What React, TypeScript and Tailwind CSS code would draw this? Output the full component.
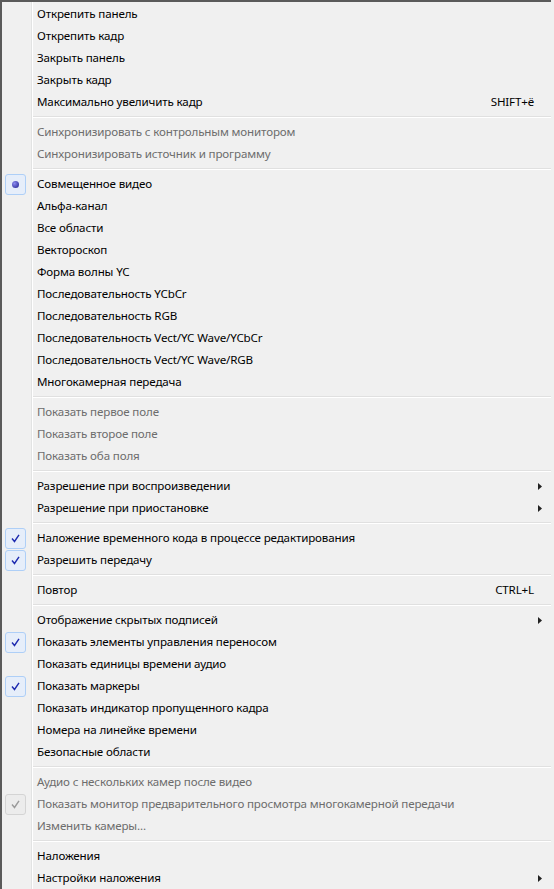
type Item =
  | { sep: true }
  | {
      sep?: false;
      label: string;
      disabled?: boolean;
      mark?: "check" | "radio";
      shortcut?: string;
      sub?: boolean;
    };

const items: Item[] = [
  { label: "Открепить панель" },
  { label: "Открепить кадр" },
  { label: "Закрыть панель" },
  { label: "Закрыть кадр" },
  { label: "Максимально увеличить кадр", shortcut: "SHIFT+ё" },
  { sep: true },
  { label: "Синхронизировать с контрольным монитором", disabled: true },
  { label: "Синхронизировать источник и программу", disabled: true },
  { sep: true },
  { label: "Совмещенное видео", mark: "radio" },
  { label: "Альфа-канал" },
  { label: "Все области" },
  { label: "Вектороскоп" },
  { label: "Форма волны YC" },
  { label: "Последовательность YCbCr" },
  { label: "Последовательность RGB" },
  { label: "Последовательность Vect/YC Wave/YCbCr" },
  { label: "Последовательность Vect/YC Wave/RGB" },
  { label: "Многокамерная передача" },
  { sep: true },
  { label: "Показать первое поле", disabled: true },
  { label: "Показать второе поле", disabled: true },
  { label: "Показать оба поля", disabled: true },
  { sep: true },
  { label: "Разрешение при воспроизведении", sub: true },
  { label: "Разрешение при приостановке", sub: true },
  { sep: true },
  { label: "Наложение временного кода в процессе редактирования", mark: "check" },
  { label: "Разрешить передачу", mark: "check" },
  { sep: true },
  { label: "Повтор", shortcut: "CTRL+L" },
  { sep: true },
  { label: "Отображение скрытых подписей", sub: true },
  { label: "Показать элементы управления переносом", mark: "check" },
  { label: "Показать единицы времени аудио" },
  { label: "Показать маркеры", mark: "check" },
  { label: "Показать индикатор пропущенного кадра" },
  { label: "Номера на линейке времени" },
  { label: "Безопасные области" },
  { sep: true },
  { label: "Аудио с нескольких камер после видео", disabled: true },
  {
    label: "Показать монитор предварительного просмотра многокамерной передачи",
    disabled: true,
    mark: "check",
  },
  { label: "Изменить камеры...", disabled: true },
  { sep: true },
  { label: "Наложения" },
  { label: "Настройки наложения", sub: true },
];

function Mark({ kind, disabled }: { kind: "check" | "radio"; disabled?: boolean }) {
  return (
    <div
      className={
        "w-[21px] h-[21px] rounded-[3px] border flex items-center justify-center " +
        (disabled ? "border-[#d4d4d4] bg-[#ececec]" : "border-[#aecff7] bg-[#e6eefa]")
      }
    >
      {kind === "radio" ? (
        <div className="w-[7px] h-[7px] rounded-full bg-[radial-gradient(circle_at_35%_35%,#8c8cf0,#1c1c8a)]" />
      ) : (
        <svg width="9" height="9" viewBox="0 0 9 9">
          <path
            d="M1 4.5 L3.5 7.5 L8 0.8"
            fill="none"
            stroke={disabled ? "#9a9a9a" : "#1d2ab0"}
            strokeWidth="1.4"
          />
        </svg>
      )}
    </div>
  );
}

export default function App() {
  return (
    <div
      className="w-[554px] h-[889px] overflow-hidden bg-[#f0f0f0] text-[11.6px] tracking-[-0.15px] text-black"
      style={{ fontFamily: '"Segoe UI", "Noto Sans", sans-serif' }}
    >
      <div className="relative h-full border-l-2 border-t-2 border-[#5a5a5a] mr-[3px] pt-[1px]">
        <div className="absolute left-[29px] top-0 bottom-0 w-[2px] border-l border-[#e2e3e3] bg-white" />
        {items.map((it, i) =>
          it.sep ? (
            <div key={i} className="h-[8px] flex items-center pl-[30px]">
              <div className="w-full h-[2px] border-t border-[#e0e0e0] border-b border-b-white" />
            </div>
          ) : (
            <div key={i} className="h-[22px] flex items-center">
              <div className="w-[35px] pl-[3px] flex items-center">
                {it.mark && <Mark kind={it.mark} disabled={it.disabled} />}
              </div>
              <div
                className={
                  "flex-1 whitespace-nowrap " + (it.disabled ? "text-[#6d6d6d]" : "text-black")
                }
              >
                {it.label}
              </div>
              {it.shortcut && <div className="pr-[17px]">{it.shortcut}</div>}
              {it.sub && (
                <div className="pr-[9px]">
                  <svg width="4" height="7" viewBox="0 0 4 7">
                    <path d="M0 0 L4 3.5 L0 7 Z" fill="#222" />
                  </svg>
                </div>
              )}
            </div>
          )
        )}
      </div>
    </div>
  );
}
